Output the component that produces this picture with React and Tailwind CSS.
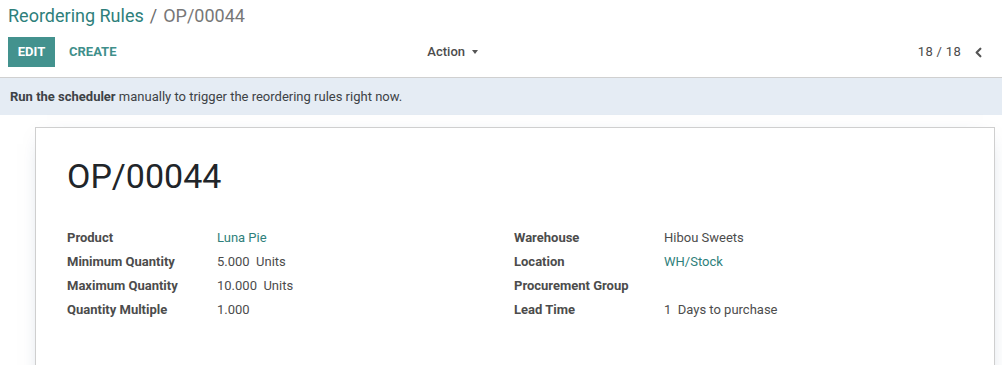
import { ChevronLeft } from 'lucide-react';

const LEFT = [
  { label: 'Product', value: 'Luna Pie', link: true },
  { label: 'Minimum Quantity', value: '5.000\u00a0 Units' },
  { label: 'Maximum Quantity', value: '10.000\u00a0 Units' },
  { label: 'Quantity Multiple', value: '1.000' },
];

const RIGHT = [
  { label: 'Warehouse', value: 'Hibou Sweets' },
  { label: 'Location', value: 'WH/Stock', link: true },
  { label: 'Procurement Group', value: '' },
  { label: 'Lead Time', value: '1\u00a0 Days to purchase' },
];

function FieldGroup({ rows }) {
  return (
    <div className="flex flex-col">
      {rows.map(r => (
        <div key={r.label} className="flex h-[24px] items-center">
          <span className="w-[150px] shrink-0 font-bold text-[#4c4c4c]">{r.label}</span>
          <span className={r.link ? 'text-[#2e7f7b]' : 'text-[#4c4c4c]'}>{r.value}</span>
        </div>
      ))}
    </div>
  );
}

export default function App() {
  return (
    <div className="w-[1002px] h-[365px] overflow-hidden bg-white text-[13px] text-[#4c4c4c]" style={{ fontFamily: 'Roboto, "Noto Sans", sans-serif' }}>
      {/* Control panel */}
      <div className="h-[78px] border-b border-[#d0d0d0] px-[8px]">
        <div className="flex h-[32px] items-center text-[18px] leading-none">
          <span className="text-[#2e7f7b]">Reordering Rules</span>
          <span className="mx-[6px] text-[#6c6c6c]">/</span>
          <span className="text-[#777]">OP/00044</span>
        </div>
        <div className="mt-[5px] grid grid-cols-2">
          <div className="flex items-center">
            <button className="h-[30px] w-[47px] bg-[#43928e] text-[13px] font-bold text-white">EDIT</button>
            <button className="ml-[14px] text-[13px] font-bold text-[#3f8f8b]">CREATE</button>
            <button className="ml-auto mr-[23px] flex items-center gap-[7px] font-medium text-[#4c4c4c]">
              Action
              <span className="h-0 w-0 border-x-[3px] border-t-[4px] border-x-transparent border-t-[#555]" />
            </button>
          </div>
          <div className="flex items-center justify-end pr-[8px]">
            <span className="tracking-[0.3px] text-[#4c4c4c]">18 / 18</span>
            <ChevronLeft className="ml-[10px] h-[15px] w-[15px] text-[#555]" strokeWidth={3.5} />
          </div>
        </div>
      </div>

      {/* Info banner */}
      <div className="flex h-[37px] items-center bg-[#e5ecf4] px-[10px] text-[#3d4246]">
        <span><b className="font-bold">Run the scheduler</b> manually to trigger the reordering rules right now.</span>
      </div>

      {/* Sheet */}
      <div className="pl-[35px] pr-[7px] pt-[12px]">
        <div className="h-[300px] border border-[#cfcfcf] bg-white px-[31px] pt-[28px] shadow-[0_5px_20px_-12px_rgba(40,70,120,0.5)]">
          <h1 className="text-[34px] leading-[40px] text-[#212529]">OP/00044</h1>
          <div className="mt-[30px] grid grid-cols-[447px_1fr]">
            <FieldGroup rows={LEFT} />
            <FieldGroup rows={RIGHT} />
          </div>
        </div>
      </div>
    </div>
  );
}
